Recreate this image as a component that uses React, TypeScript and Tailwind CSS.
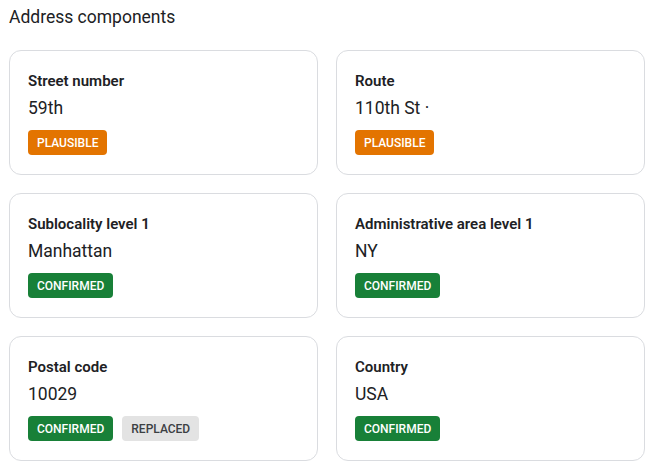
import React from "react";

type Badge = { label: string; kind: "plausible" | "confirmed" | "replaced" };
type Item = { title: string; value: string; badges: Badge[] };

const items: Item[] = [
  { title: "Street number", value: "59th", badges: [{ label: "PLAUSIBLE", kind: "plausible" }] },
  { title: "Route", value: "110th St ·", badges: [{ label: "PLAUSIBLE", kind: "plausible" }] },
  { title: "Sublocality level 1", value: "Manhattan", badges: [{ label: "CONFIRMED", kind: "confirmed" }] },
  { title: "Administrative area level 1", value: "NY", badges: [{ label: "CONFIRMED", kind: "confirmed" }] },
  {
    title: "Postal code",
    value: "10029",
    badges: [
      { label: "CONFIRMED", kind: "confirmed" },
      { label: "REPLACED", kind: "replaced" },
    ],
  },
  { title: "Country", value: "USA", badges: [{ label: "CONFIRMED", kind: "confirmed" }] },
];

function Chip({ b }: { b: Badge }) {
  const cls =
    b.kind === "plausible"
      ? "bg-[#e37400] text-white"
      : b.kind === "confirmed"
      ? "bg-[#188038] text-white"
      : "bg-[#e3e3e3] text-[#3c4043]";
  return (
    <span
      className={`${cls} inline-flex h-[25px] items-center rounded-[4px] px-[9px] text-[12px] font-medium leading-none`}
    >
      {b.label}
    </span>
  );
}

export default function App() {
  return (
    <div
      className="min-h-[473px] bg-white px-[9px] pt-[5px] text-[#202124]"
      style={{ fontFamily: "Roboto, 'Noto Sans', sans-serif" }}
    >
      <h2 className="text-[17.5px] leading-[24px] font-normal">Address components</h2>
      <div className="mt-[21px] grid w-[636px] grid-cols-2 gap-x-[18px] gap-y-[18px]">
        {items.map((it) => (
          <div
            key={it.title}
            className="flex h-[125px] flex-col rounded-[12px] border border-[#dadce0] px-[18px] pt-[20px] pb-[18px]"
          >
            <div className="text-[15px] leading-[20px] font-semibold">{it.title}</div>
            <div className="mt-[5px] text-[17.5px] leading-[24px]">{it.value}</div>
            <div className="mt-[10px] flex gap-[9px]">
              {it.badges.map((b) => (
                <Chip key={b.label} b={b} />
              ))}
            </div>
          </div>
        ))}
      </div>
    </div>
  );
}
